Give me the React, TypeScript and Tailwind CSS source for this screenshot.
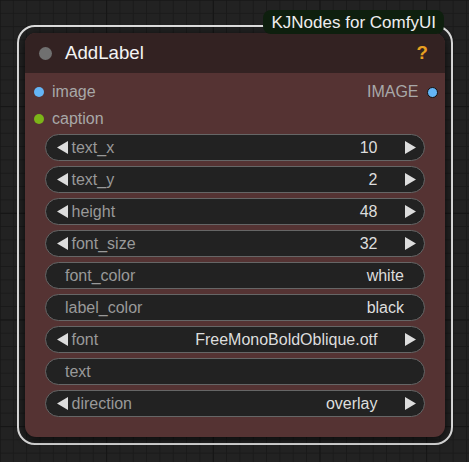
import React from "react";

function LeftArrow() {
  return (
    <svg width="11" height="13" viewBox="0 0 11 13" className="shrink-0">
      <polygon points="11,0 11,13 0,6.5" fill="#dddddd" />
    </svg>
  );
}

function RightArrow() {
  return (
    <svg width="11" height="13" viewBox="0 0 11 13" className="shrink-0">
      <polygon points="0,0 0,13 11,6.5" fill="#dddddd" />
    </svg>
  );
}

type W = { label: string; value: string; arrows: boolean };

function Widget({ label, value, arrows }: W) {
  if (arrows) {
    return (
      <div className="flex h-[27px] items-center rounded-full border border-[#666] bg-[#222] text-[16px] leading-none">
        <span className="ml-[10.5px] flex">
          <LeftArrow />
        </span>
        <span className="ml-[4px] text-[#999]">{label}</span>
        <span className="ml-auto mr-[27px] text-[#ddd]">{value}</span>
        <span className="mr-[8.5px] flex">
          <RightArrow />
        </span>
      </div>
    );
  }
  return (
    <div className="flex h-[27px] items-center rounded-full border border-[#666] bg-[#222] text-[16px] leading-none">
      <span className="ml-[19px] text-[#999]">{label}</span>
      <span className="ml-auto mr-[20px] text-[#ddd]">{value}</span>
    </div>
  );
}

const widgets: W[] = [
  { label: "text_x", value: "10", arrows: true },
  { label: "text_y", value: "2", arrows: true },
  { label: "height", value: "48", arrows: true },
  { label: "font_size", value: "32", arrows: true },
  { label: "font_color", value: "white", arrows: false },
  { label: "label_color", value: "black", arrows: false },
  { label: "font", value: "FreeMonoBoldOblique.otf", arrows: true },
  { label: "text", value: "", arrows: false },
  { label: "direction", value: "overlay", arrows: true },
];

export default function App() {
  return (
    <div className="h-[462px] w-[469px] overflow-hidden bg-[#222] bg-[linear-gradient(to_right,#151515_1px,transparent_1px),linear-gradient(to_bottom,#151515_1px,transparent_1px),linear-gradient(to_right,#1a1a1a_1px,transparent_1px),linear-gradient(to_bottom,#1a1a1a_1px,transparent_1px)] bg-[size:106.667px_106.667px,106.667px_106.667px,13.333px_13.333px,13.333px_13.333px] bg-[position:-0.5px_-0.5px] pl-[17px] pt-[25px] font-['Liberation_Sans',Arial,sans-serif]">
      <div className="relative h-[420px] w-[436px] rounded-[18px] border-2 border-[#dedede] p-[6px]">
        <div className="absolute -top-[17px] right-[7px] flex h-[24px] w-[181px] items-center rounded-[8px] bg-[#0e1f0e] pl-[8.5px] text-[17px] leading-none text-[#eeeeee]">
          KJNodes for ComfyUI
        </div>
        <div className="flex h-[404px] w-[420px] flex-col overflow-hidden rounded-[11px] bg-[#553333] shadow-[0_2px_10px_rgba(0,0,0,0.75)]">
          <div className="flex h-[40px] shrink-0 items-center bg-[#332222]">
            <span className="ml-[13.5px] h-[13px] w-[13px] rounded-full bg-[#707070]" />
            <span className="ml-[13.5px] text-[18.67px] leading-none text-[#f4f4f4]">AddLabel</span>
            <span className="ml-auto mr-[17px] text-[18.67px] font-bold leading-none text-[#e8a020]">?</span>
          </div>
          <div className="flex flex-col px-[20px] pb-[20px] pt-[6px]">
            <div className="-mx-[20px] flex h-[26.67px] items-center text-[16px] leading-none">
              <span className="ml-[8.5px] h-[10px] w-[10px] rounded-full bg-[#64b5f6]" />
              <span className="ml-[8.5px] text-[#a8a8a8]">image</span>
              <span className="ml-auto text-[#a8a8a8]">IMAGE</span>
              <span className="ml-[8px] mr-[7px] h-[11.5px] w-[11.5px] rounded-full border border-[#111] bg-[#64b5f6]" />
            </div>
            <div className="-mx-[20px] flex h-[26.67px] items-center text-[16px] leading-none">
              <span className="ml-[8.5px] h-[10px] w-[10px] rounded-full bg-[#7cb518]" />
              <span className="ml-[8.5px] text-[#a8a8a8]">caption</span>
            </div>
            <div className="mt-[1.7px] flex flex-col gap-[5px]">
              {widgets.map((w) => (
                <Widget key={w.label} {...w} />
              ))}
            </div>
          </div>
        </div>
      </div>
    </div>
  );
}
